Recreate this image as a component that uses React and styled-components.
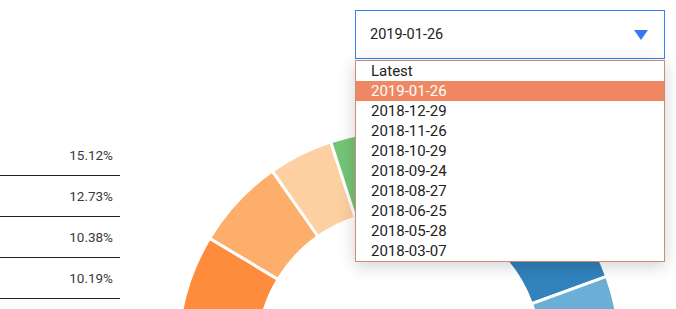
import React, { useState } from "react";
import styled, { createGlobalStyle } from "styled-components";

const GlobalStyle = createGlobalStyle`
  body {
    margin: 0;
    background: #ffffff;
    font-family: Roboto, "Liberation Sans", sans-serif;
  }
`;

const Page = styled.div`
  display: flex;
  width: 676px;
  height: 309px;
  overflow: hidden;
  background: #ffffff;
`;

const Table = styled.div`
  width: 120px;
  flex-shrink: 0;
  padding-top: 135px;
`;

const Row = styled.div`
  height: 40px;
  border-bottom: 1px solid #222;
  display: flex;
  align-items: center;
  justify-content: flex-end;
  padding-right: 7px;
  font-size: 13.5px;
  color: #3a3a3a;
`;

const Main = styled.div`
  flex: 1;
  display: flex;
  flex-direction: column;
`;

const SelectWrap = styled.div`
  position: relative;
  margin: 10px 0 0 235px;
  width: 310px;
  z-index: 2;
`;

const SelectBox = styled.div`
  box-sizing: border-box;
  height: 49px;
  border: 1px solid #3b7ef8;
  background: #fff;
  display: flex;
  align-items: center;
  justify-content: space-between;
  padding: 0 16px 0 14px;
  font-size: 14.5px;
  color: #222;
`;

const Caret = styled.svg`
  width: 14px;
  height: 10px;
  margin-top: 1px;
`;

const List = styled.ul`
  position: absolute;
  top: calc(100% + 1px);
  left: 0;
  right: 0;
  margin: 0;
  padding: 0;
  list-style: none;
  background: #fff;
  border: 1px solid #cf8b76;
  box-shadow: 0 4px 16px rgba(0, 0, 0, 0.18);
`;

const Item = styled.li`
  height: 20px;
  line-height: 20px;
  padding-left: 15px;
  font-size: 15px;
  color: ${(p) => (p.$active ? "#ffffff" : "#222")};
  background: ${(p) => (p.$active ? "#ef8862" : "transparent")};
`;

const Chart = styled.svg`
  flex-shrink: 0;
  margin: 73px 0 0 59px;
  width: 440px;
  height: 440px;
`;

const rows = ["15.12%", "12.73%", "10.38%", "10.19%"];

const options = [
  "Latest",
  "2019-01-26",
  "2018-12-29",
  "2018-11-26",
  "2018-10-29",
  "2018-09-24",
  "2018-08-27",
  "2018-06-25",
  "2018-05-28",
  "2018-03-07",
];

const segments = [
  { from: 149, to: 215, color: "#fd8d3c" },
  { from: 125, to: 149, color: "#fdae6b" },
  { from: 108, to: 125, color: "#fdd0a2" },
  { from: 76, to: 108, color: "#74c476" },
  { from: 50, to: 76, color: "#a1d99b" },
  { from: 20, to: 50, color: "#3182bd" },
  { from: -30, to: 20, color: "#6baed6" },
];

const C = 220;
const R = 221;
const r = 141;

const pt = (rad, deg) => {
  const a = (deg * Math.PI) / 180;
  return `${(C + rad * Math.cos(a)).toFixed(2)} ${(C - rad * Math.sin(a)).toFixed(2)}`;
};

const arc = (from, to) => {
  const large = to - from > 180 ? 1 : 0;
  return [
    `M ${pt(R, from)}`,
    `A ${R} ${R} 0 ${large} 0 ${pt(R, to)}`,
    `L ${pt(r, to)}`,
    `A ${r} ${r} 0 ${large} 1 ${pt(r, from)}`,
    "Z",
  ].join(" ");
};

const App = () => {
  const [selected] = useState("2019-01-26");

  return (
    <Page>
      <GlobalStyle />
      <Table>
        {rows.map((v) => (
          <Row key={v}>{v}</Row>
        ))}
      </Table>
      <Main>
        <SelectWrap>
          <SelectBox>
            <span>{selected}</span>
            <Caret viewBox="0 0 14 10">
              <polygon points="0,0 14,0 7,10" fill="#3478f6" />
            </Caret>
          </SelectBox>
          <List>
            {options.map((o) => (
              <Item key={o} $active={o === selected}>
                {o}
              </Item>
            ))}
          </List>
        </SelectWrap>
        <Chart viewBox="0 0 440 440">
          {segments.map((s) => (
            <path
              key={s.color}
              d={arc(s.from, s.to)}
              fill={s.color}
              stroke="#fff"
              strokeWidth="3"
            />
          ))}
        </Chart>
      </Main>
    </Page>
  );
};

export default App;
